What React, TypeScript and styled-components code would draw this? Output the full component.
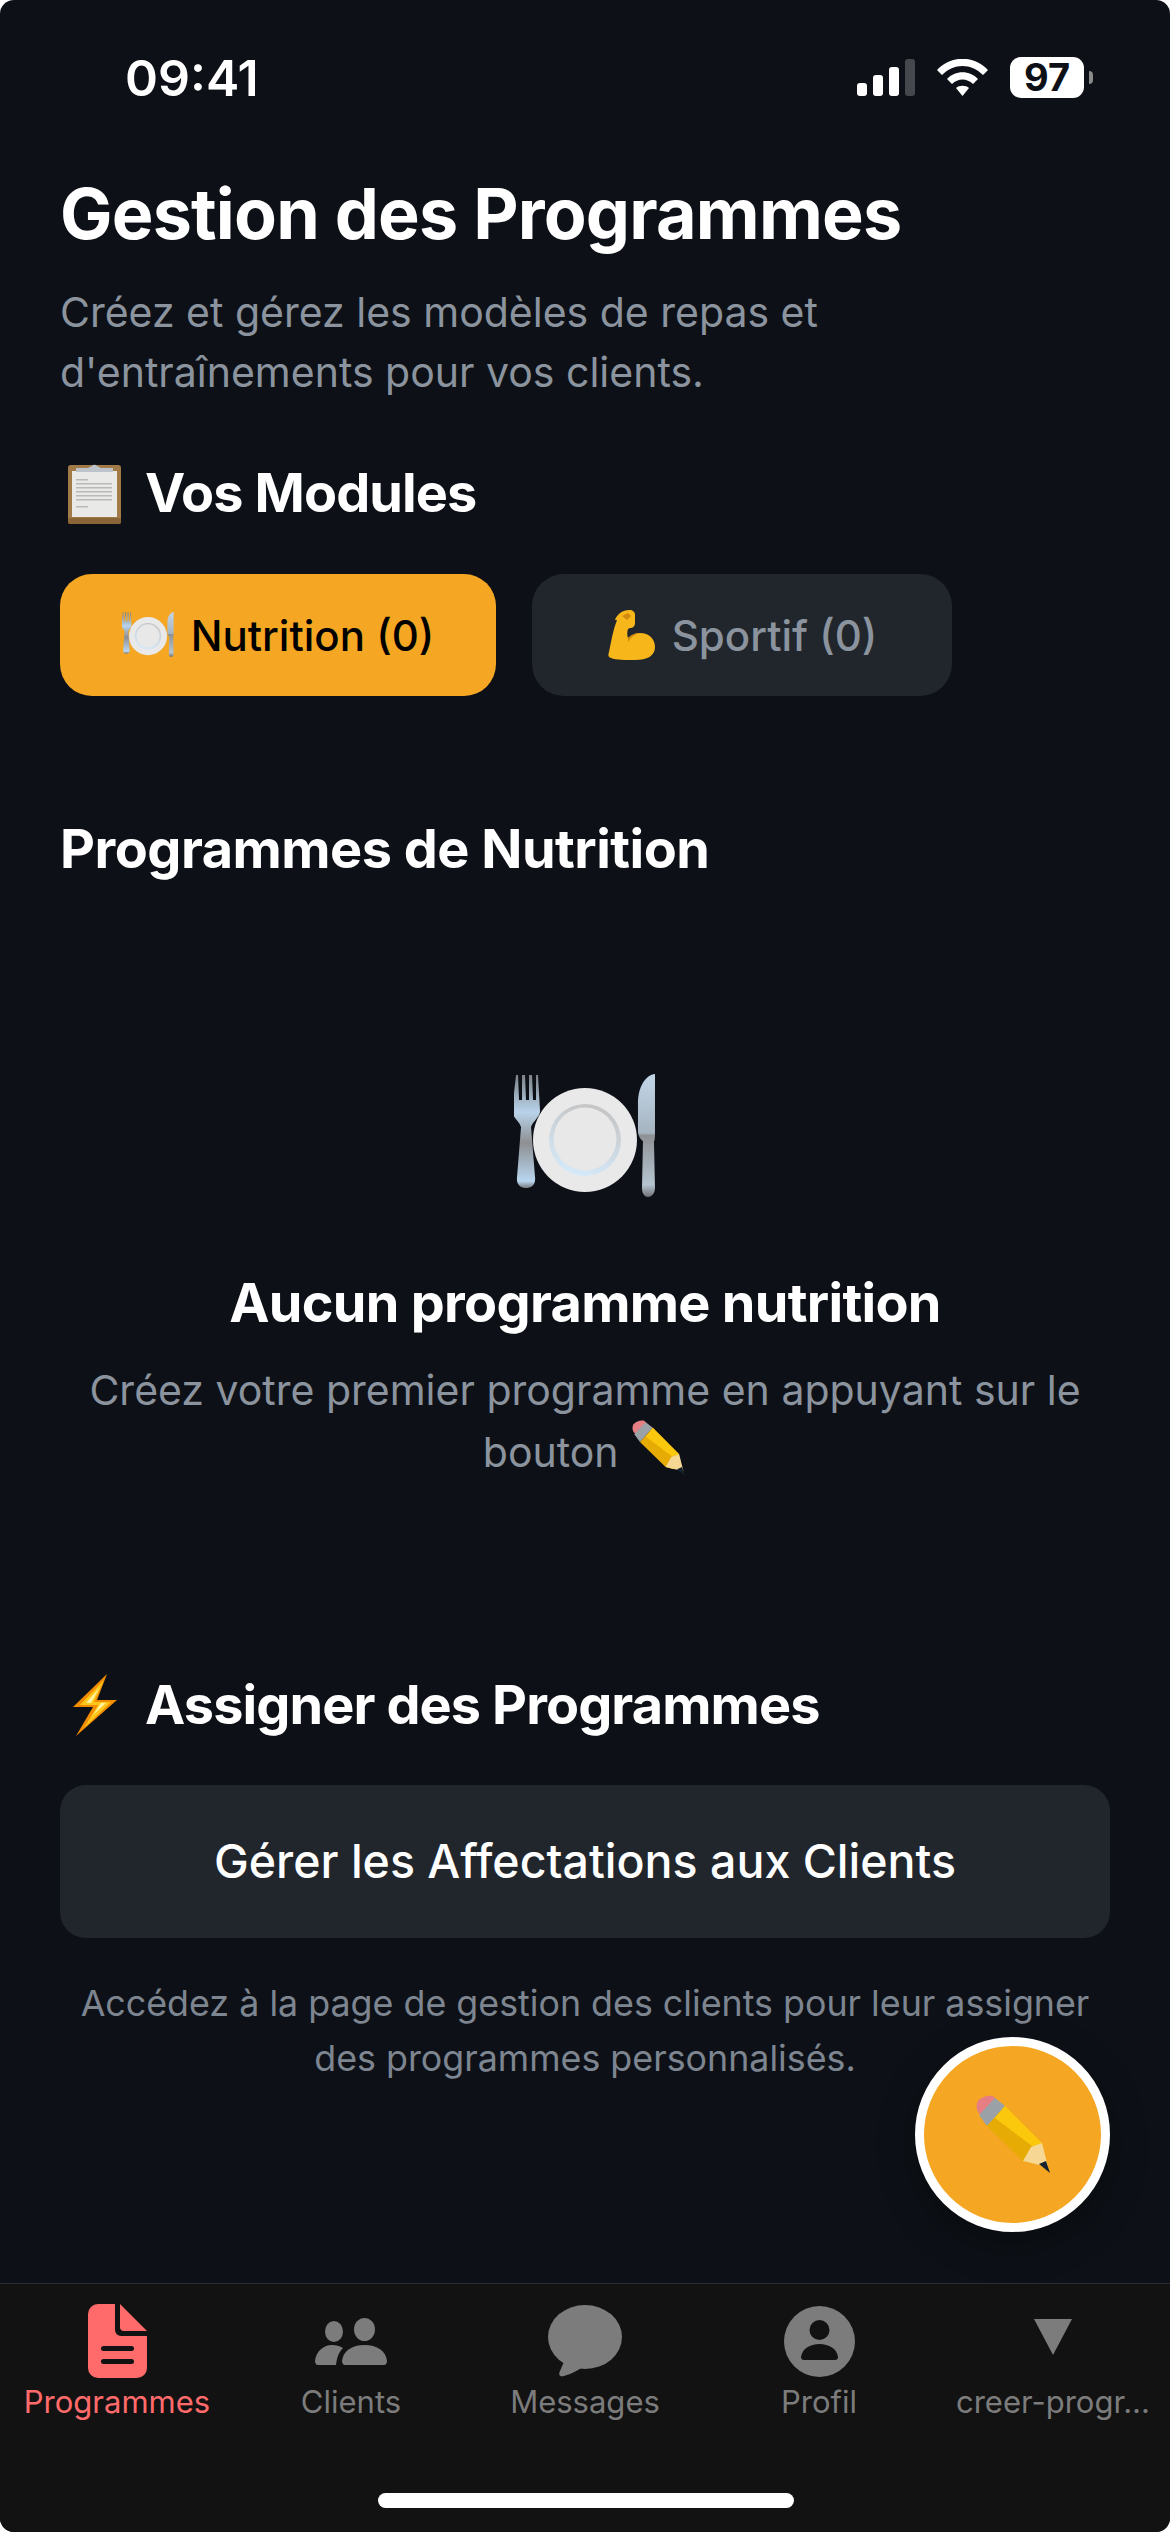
import React from 'react';
import styled, { createGlobalStyle } from 'styled-components';

const GlobalStyle = createGlobalStyle`
  html, body {
    margin: 0;
    padding: 0;
    background: #ffffff;
  }
  * {
    box-sizing: border-box;
  }
`;

interface EmojiProps {
  size: number;
}

const PlateEmoji = ({ size }: EmojiProps) => (
  <svg width={size} height={size * 0.873} viewBox="0 0 142 124">
    <defs>
      <linearGradient id="metal" x1="0" y1="0" x2="0" y2="1">
        <stop offset="0" stopColor="#7d8288" />
        <stop offset="0.33" stopColor="#b9d3ea" />
        <stop offset="0.6" stopColor="#8d8f92" />
        <stop offset="0.94" stopColor="#b9d6f0" />
        <stop offset="1" stopColor="#77797c" />
      </linearGradient>
      <linearGradient id="blade" x1="0" y1="0" x2="0" y2="1">
        <stop offset="0" stopColor="#c2d6e8" />
        <stop offset="0.48" stopColor="#a6b4c0" />
        <stop offset="0.5" stopColor="#8f9295" />
        <stop offset="0.9" stopColor="#b5c4d0" />
        <stop offset="1" stopColor="#6f7174" />
      </linearGradient>
      <linearGradient id="well" x1="0.6" y1="0" x2="0.3" y2="1">
        <stop offset="0" stopColor="#c4c4c4" />
        <stop offset="1" stopColor="#d6ebfb" />
      </linearGradient>
    </defs>
    <path
      d="M2 1 h2 l1 25 h3 l0-25 h3 l1 25 h3 l0-25 h3 l1 25 h3 l0-25 h2 l2 36 c0 6-7 10-9 16 l4 50 c1 8-4 11-9 11 s-10-3-9-11 l4-50 c-2-6-9-10-9-16z"
      fill="url(#metal)"
    />
    <circle cx="71" cy="66" r="52" fill="#e9e9ea" />
    <circle cx="71" cy="66" r="36" fill="url(#well)" />
    <circle cx="71" cy="65" r="31.500" fill="#e8e8e9" />
    <path d="M141 0 c-9 1-17 12-17 30 v27 c0 5 3 9 5 10 l-1 47 c0 6 3 9 6 9 s7-3 7-9 l-1-47 c1 0 1-5 1-10z" fill="url(#blade)" />
  </svg>
);

const ClipboardEmoji = () => (
  <svg width={53} height={63} viewBox="0 0 53 63">
    <rect x="0" y="4" width="53" height="59" rx="3" fill="#a17a48" />
    <rect x="4" y="10" width="45" height="46" fill="#e9e9e7" />
    <g fill="#b9b9b8">
      <rect x="8" y="18" width="12" height="1.5" />
      <rect x="8" y="22" width="36" height="1.5" />
      <rect x="8" y="26" width="36" height="1.5" />
      <rect x="8" y="30" width="36" height="1.5" />
      <rect x="8" y="34" width="36" height="1.5" />
      <rect x="8" y="38" width="36" height="1.5" />
      <rect x="8" y="45" width="12" height="1.5" />
    </g>
    <path d="M8 11 v-4 h12 l4-2 a3 3 0 0 1 5 0 l4 2 h12 v4z" fill="#bcc3cb" />
    <rect x="0" y="57" width="53" height="6" rx="2" fill="#8a6537" />
  </svg>
);

const MuscleEmoji = () => (
  <svg width={48} height={50} viewBox="0 0 48 50">
    <path
      d="M8 10 C10 4 16 0 22 0 c4 0 6 2 6 5 v8 c0 3-2 5-5 5 l-2 1 c-1 3-1 6 0 9 c3-3 7-5 12-5 c9 0 15 6 15 14 c0 9-8 13-20 13 c-10 0-19 0-24-2 c-3-1-3-3-2-6 c2-10 4-22 8-32z"
      fill="#f7b619"
    />
    <path d="M21 28 c4-4 8-5 12-5 c-5 1-9 4-12 9z" fill="#d08a10" />
    <path d="M15 6 l6-3 l3 3 l-4 4z" fill="#d08a10" />
  </svg>
);

const BoltEmoji = () => (
  <svg width={44} height={62} viewBox="0 0 44 62">
    <path d="M34 0 L0 33 H20 L3 62 L44 26 H24z" fill="#f28c00" />
    <path d="M31 6 L7 31 H25 L11 54 L38 28 H21z" fill="#ffc61a" />
    <path d="M27 13 L13 29 H28 L20 41 L33 29 H18z" fill="#fff3a0" />
  </svg>
);

const PencilEmoji = ({ size }: EmojiProps) => (
  <svg width={size} height={size} viewBox="0 0 80 80">
    <path d="M5 6 c3-4 10-6 15-5 l8 8 l-15 16 l-8-8 c-2-3-2-8 0-11z" fill="#e57f84" />
    <path d="M6 20 L22 3 L32 11 L14 31z" fill="#9aa2a8" />
    <path d="M14 31 L32 11 L69 48 L61 69 L50 66z" fill="#e6ab04" />
    <path d="M22 23 L32 11 L69 48 L63 54z" fill="#fbc80e" />
    <path d="M50 66 L58 52 L69 48 L75 72z" fill="#f6d894" />
    <path d="M66 69 L73 66 L77 78z" fill="#16222e" />
  </svg>
);

const DocumentIcon = () => (
  <svg width={59} height={74} viewBox="0 0 59 74" fill="#ff6b6b">
    <path d="M10 0 H27 V26 a6 6 0 0 0 6 6 H59 V64 a10 10 0 0 1-10 10 H10 a10 10 0 0 1-10-10 V10 a10 10 0 0 1 10-10z" />
    <path d="M32 0 L59 27 H36 a4 4 0 0 1-4-4z" />
    <rect x="13" y="42" width="33" height="5" rx="2.5" fill="#121212" />
    <rect x="13" y="55" width="33" height="5" rx="2.5" fill="#121212" />
  </svg>
);

const PeopleIcon = () => (
  <svg width={72} height={47} viewBox="0 0 72 47" fill="#7c7c7c">
    <ellipse cx="19" cy="13.5" rx="9" ry="10.5" />
    <ellipse cx="49.5" cy="11.5" rx="10.5" ry="11.5" />
    <path d="M0 43 C1 33 9 27 17 27 c4 0 8 1 11 3 c-4 4-6 9-7 17 H3 c-2 0-3-2-3-4z" />
    <path d="M27 43 C28 33 37 27 49.5 27 S71 33 72 43 c0 2-1 4-3 4 H30 c-2 0-3-2-3-4z" />
  </svg>
);

const BubbleIcon = () => (
  <svg width={74} height={72} viewBox="0 0 74 72" fill="#7c7c7c">
    <ellipse cx="37" cy="32" rx="37" ry="32" />
    <path d="M18 52 L12 66 c-2 4 0 6 4 5 c8-2 16-7 22-11z" />
  </svg>
);

const ProfileIcon = () => (
  <svg width={71} height={71} viewBox="0 0 71 71">
    <circle cx="35.5" cy="35.5" r="35.5" fill="#7c7c7c" />
    <circle cx="35.5" cy="24" r="10" fill="#121212" />
    <path d="M17 51 C18 43 26 38 35.5 38 S53 43 54 51 c0 2-1 3-3 3 H20 c-2 0-3-1-3-3z" fill="#121212" />
  </svg>
);

const TriangleIcon = () => (
  <svg width={38} height={44} viewBox="0 0 38 44" fill="#7c7c7c">
    <path d="M0 0 H38 L19 36z" />
  </svg>
);

const SignalIcon = () => (
  <svg width={58} height={37} viewBox="0 0 58 37">
    <rect x="0" y="24" width="10" height="13" rx="3" fill="#fff" />
    <rect x="16" y="16" width="10" height="21" rx="3" fill="#fff" />
    <rect x="32" y="8" width="10" height="29" rx="3" fill="#fff" />
    <rect x="48" y="0" width="10" height="37" rx="3" fill="#45484d" />
  </svg>
);

const WifiIcon = () => (
  <svg width={51} height={37} viewBox="0 0 51 37" fill="#fff">
    <path d="M0 11 C14 -4 37 -4 51 11 l-5 5 C34 4 17 4 5 16z" />
    <path d="M10 20 C18 11 33 11 41 20 l-5 5 C30 19 21 19 15 25z" />
    <path d="M19 29 c3-3 10-3 13 0 l-6.500 8z" />
  </svg>
);

const Screen = styled.div`
  position: relative;
  width: 1170px;
  height: 2532px;
  display: flex;
  flex-direction: column;
  overflow: hidden;
  border-radius: 14px;
  background: #0d1117;
  font-family: Inter, 'Liberation Sans', sans-serif;
`;

const StatusBar = styled.div`
  height: 174px;
  flex-shrink: 0;
  display: flex;
  justify-content: space-between;
  align-items: flex-start;
  padding: 50px 86px 0 125px;
`;

const Clock = styled.span`
  font-size: 50px;
  line-height: 56px;
  font-weight: 600;
  color: #ffffff;
`;

const StatusIcons = styled.div`
  display: flex;
  align-items: center;
  gap: 22px;
  margin-top: 7px;
`;

const Battery = styled.div`
  position: relative;
  width: 74px;
  height: 41px;
  border-radius: 11px;
  background: #ffffff;
  color: #0d1117;
  font-size: 38px;
  font-weight: 700;
  line-height: 41px;
  text-align: center;

  &::after {
    content: '';
    position: absolute;
    right: -9px;
    top: 14px;
    width: 4px;
    height: 13px;
    border-radius: 0 4px 4px 0;
    background: #8a8a8a;
  }
`;

const Content = styled.main`
  flex: 1;
  display: flex;
  flex-direction: column;
  padding: 0 60px;
`;

const PageTitle = styled.h1`
  margin: 0;
  font-size: 70px;
  line-height: 80px;
  letter-spacing: -0.8px;
  font-weight: 700;
  color: #ffffff;
`;

const Subtitle = styled.p`
  margin: 28px 0 0;
  font-size: 41px;
  line-height: 60px;
  font-weight: 400;
  color: #8b949e;
`;

const SectionHeading = styled.h2<{ $top: number }>`
  margin: ${(p) => p.$top}px 0 0;
  display: flex;
  align-items: center;
  gap: 16px;
  height: 64px;
  font-size: 54px;
  letter-spacing: -0.9px;
  font-weight: 700;
  color: #ffffff;
`;

const EmojiSlot = styled.span`
  width: 69px;
  display: flex;
  justify-content: center;
`;

const Tabs = styled.div`
  display: flex;
  gap: 36px;
  margin-top: 50px;
`;

const TabButton = styled.button<{ $active?: boolean }>`
  height: 122px;
  width: ${(p) => (p.$active ? 436 : 420)}px;
  display: flex;
  align-items: center;
  justify-content: center;
  gap: 17px;
  border: 0;
  border-radius: 32px;
  padding: 0;
  font-family: inherit;
  font-size: 42px;
  font-weight: 500;
  background: ${(p) => (p.$active ? '#f5a623' : '#21262d')};
  color: ${(p) => (p.$active ? '#000000' : '#8b949e')};
`;

const SubHeading = styled.h3`
  margin: 123px 0 0;
  font-size: 54px;
  line-height: 60px;
  letter-spacing: -0.5px;
  font-weight: 700;
  color: #ffffff;
`;

const EmptyState = styled.div`
  display: flex;
  flex-direction: column;
  align-items: center;
  margin-top: 195px;
  text-align: center;
`;

const EmptyTitle = styled.h4`
  margin: 70px 0 0;
  font-size: 54px;
  line-height: 70px;
  letter-spacing: -0.7px;
  font-weight: 700;
  color: #ffffff;
`;

const EmptyText = styled.p`
  margin: 22px 0 0;
  font-size: 41px;
  line-height: 60px;
  color: #8b949e;

  svg {
    vertical-align: -10px;
  }
`;

const AssignButton = styled.button`
  width: 100%;
  height: 153px;
  margin-top: 48px;
  border: 0;
  border-radius: 26px;
  background: #21262d;
  color: #ffffff;
  font-family: inherit;
  font-size: 46.5px;
  font-weight: 500;
`;

const Note = styled.p`
  margin: 38px 0 0;
  font-size: 35.8px;
  line-height: 55px;
  color: #7d8590;
  text-align: center;
`;

const Fab = styled.button`
  position: absolute;
  right: 60px;
  bottom: 300px;
  width: 195px;
  height: 195px;
  display: flex;
  align-items: center;
  justify-content: center;
  padding: 0;
  border: 9px solid #ffffff;
  border-radius: 50%;
  background: #f5a623;
  box-shadow: 0 12px 36px rgba(0, 0, 0, 0.35);
`;

const TabBar = styled.nav`
  position: relative;
  height: 249px;
  flex-shrink: 0;
  display: grid;
  grid-template-columns: repeat(5, 234px);
  background: #121212;
  border-top: 1px solid #2a2d31;
`;

const TabItem = styled.div<{ $active?: boolean }>`
  display: flex;
  flex-direction: column;
  align-items: center;
  padding-top: 20px;
  color: ${(p) => (p.$active ? '#ff6b6b' : '#7c7c7c')};
`;

const TabIcon = styled.div`
  height: 74px;
  display: flex;
  align-items: center;
  justify-content: center;
`;

const TabLabel = styled.span`
  margin-top: 4px;
  width: 200px;
  text-align: center;
  font-size: 31px;
  line-height: 40px;
  font-weight: 400;
  white-space: nowrap;
`;

const HomeIndicator = styled.div`
  position: absolute;
  left: 378px;
  bottom: 24px;
  width: 416px;
  height: 15px;
  border-radius: 8px;
  background: #ffffff;
`;

const App = () => {
  return (
    <Screen>
      <GlobalStyle />
      <StatusBar>
        <Clock>09:41</Clock>
        <StatusIcons>
          <SignalIcon />
          <WifiIcon />
          <Battery>97</Battery>
        </StatusIcons>
      </StatusBar>
      <Content>
        <PageTitle>Gestion des Programmes</PageTitle>
        <Subtitle>
          Créez et gérez les modèles de repas et
          <br />
          d'entraînements pour vos clients.
        </Subtitle>
        <SectionHeading $top={58}>
          <EmojiSlot>
            <ClipboardEmoji />
          </EmojiSlot>
          Vos Modules
        </SectionHeading>
        <Tabs>
          <TabButton $active>
            <PlateEmoji size={52} />
            Nutrition (0)
          </TabButton>
          <TabButton>
            <MuscleEmoji />
            Sportif (0)
          </TabButton>
        </Tabs>
        <SubHeading>Programmes de Nutrition</SubHeading>
        <EmptyState>
          <PlateEmoji size={142} />
          <EmptyTitle>Aucun programme nutrition</EmptyTitle>
          <EmptyText>
            Créez votre premier programme en appuyant sur le
            <br />
            bouton <PencilEmoji size={57} />
          </EmptyText>
        </EmptyState>
        <SectionHeading $top={191}>
          <EmojiSlot>
            <BoltEmoji />
          </EmojiSlot>
          Assigner des Programmes
        </SectionHeading>
        <AssignButton>Gérer les Affectations aux Clients</AssignButton>
        <Note>
          Accédez à la page de gestion des clients pour leur assigner
          <br />
          des programmes personnalisés.
        </Note>
      </Content>
      <Fab>
        <PencilEmoji size={80} />
      </Fab>
      <TabBar>
        <TabItem $active>
          <TabIcon>
            <DocumentIcon />
          </TabIcon>
          <TabLabel>Programmes</TabLabel>
        </TabItem>
        <TabItem>
          <TabIcon>
            <PeopleIcon />
          </TabIcon>
          <TabLabel>Clients</TabLabel>
        </TabItem>
        <TabItem>
          <TabIcon>
            <BubbleIcon />
          </TabIcon>
          <TabLabel>Messages</TabLabel>
        </TabItem>
        <TabItem>
          <TabIcon>
            <ProfileIcon />
          </TabIcon>
          <TabLabel>Profil</TabLabel>
        </TabItem>
        <TabItem>
          <TabIcon>
            <TriangleIcon />
          </TabIcon>
          <TabLabel>creer-progr...</TabLabel>
        </TabItem>
        <HomeIndicator />
      </TabBar>
    </Screen>
  );
};

export default App;
